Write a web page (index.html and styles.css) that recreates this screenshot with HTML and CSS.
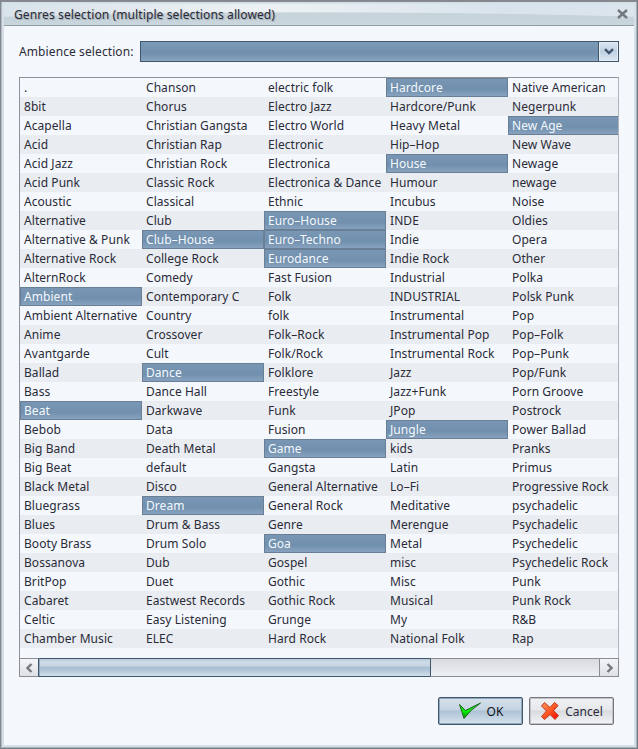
FILE: index.html
```
<!DOCTYPE html>
<html lang="en">
<head>
<meta charset="utf-8">
<title>Genres selection</title>
<link rel="stylesheet" href="styles.css">
</head>
<body>
<div class="window">
<header class="titlebar">
<h1>Genres selection (multiple selections allowed)</h1>
<svg class="close" width="11" height="10" viewBox="0 0 11 10"><path d="M1 1L10 9M10 1L1 9"/></svg>
</header>
<main class="content">
<div class="ambience">
<span class="label">Ambience selection:</span>
<div class="combo"><div class="combo-value"></div><div class="combo-arrow"><svg width="10" height="7" viewBox="0 0 10 7"><path d="M1 1.2L5 5L9 1.2"/></svg></div></div>
</div>
<div class="list">
<div class="columns">
<ul><li>.</li><li>8bit</li><li>Acapella</li><li>Acid</li><li>Acid Jazz</li><li>Acid Punk</li><li>Acoustic</li><li>Alternative</li><li>Alternative &amp; Punk</li><li>Alternative Rock</li><li>AlternRock</li><li class="sel">Ambient</li><li>Ambient Alternative</li><li>Anime</li><li>Avantgarde</li><li>Ballad</li><li>Bass</li><li class="sel">Beat</li><li>Bebob</li><li>Big Band</li><li>Big Beat</li><li>Black Metal</li><li>Bluegrass</li><li>Blues</li><li>Booty Brass</li><li>Bossanova</li><li>BritPop</li><li>Cabaret</li><li>Celtic</li><li>Chamber Music</li></ul>
<ul><li>Chanson</li><li>Chorus</li><li>Christian Gangsta</li><li>Christian Rap</li><li>Christian Rock</li><li>Classic Rock</li><li>Classical</li><li>Club</li><li class="sel">Club–House</li><li>College Rock</li><li>Comedy</li><li>Contemporary C</li><li>Country</li><li>Crossover</li><li>Cult</li><li class="sel">Dance</li><li>Dance Hall</li><li>Darkwave</li><li>Data</li><li>Death Metal</li><li>default</li><li>Disco</li><li class="sel">Dream</li><li>Drum &amp; Bass</li><li>Drum Solo</li><li>Dub</li><li>Duet</li><li>Eastwest Records</li><li>Easy Listening</li><li>ELEC</li></ul>
<ul><li>electric folk</li><li>Electro Jazz</li><li>Electro World</li><li>Electronic</li><li>Electronica</li><li>Electronica &amp; Dance</li><li>Ethnic</li><li class="sel">Euro–House</li><li class="sel">Euro–Techno</li><li class="sel">Eurodance</li><li>Fast Fusion</li><li>Folk</li><li>folk</li><li>Folk–Rock</li><li>Folk/Rock</li><li>Folklore</li><li>Freestyle</li><li>Funk</li><li>Fusion</li><li class="sel">Game</li><li>Gangsta</li><li>General Alternative</li><li>General Rock</li><li>Genre</li><li class="sel">Goa</li><li>Gospel</li><li>Gothic</li><li>Gothic Rock</li><li>Grunge</li><li>Hard Rock</li></ul>
<ul><li class="sel">Hardcore</li><li>Hardcore/Punk</li><li>Heavy Metal</li><li>Hip–Hop</li><li class="sel">House</li><li>Humour</li><li>Incubus</li><li>INDE</li><li>Indie</li><li>Indie Rock</li><li>Industrial</li><li>INDUSTRIAL</li><li>Instrumental</li><li>Instrumental Pop</li><li>Instrumental Rock</li><li>Jazz</li><li>Jazz+Funk</li><li>JPop</li><li class="sel">Jungle</li><li>kids</li><li>Latin</li><li>Lo–Fi</li><li>Meditative</li><li>Merengue</li><li>Metal</li><li>misc</li><li>Misc</li><li>Musical</li><li>My</li><li>National Folk</li></ul>
<ul><li>Native American</li><li>Negerpunk</li><li class="sel">New Age</li><li>New Wave</li><li>Newage</li><li>newage</li><li>Noise</li><li>Oldies</li><li>Opera</li><li>Other</li><li>Polka</li><li>Polsk Punk</li><li>Pop</li><li>Pop–Folk</li><li>Pop–Punk</li><li>Pop/Funk</li><li>Porn Groove</li><li>Postrock</li><li>Power Ballad</li><li>Pranks</li><li>Primus</li><li>Progressive Rock</li><li>psychadelic</li><li>Psychadelic</li><li>Psychedelic</li><li>Psychedelic Rock</li><li>Punk</li><li>Punk Rock</li><li>R&amp;B</li><li>Rap</li></ul>
</div>
</div>
<div class="scrollbar">
<div class="step"><svg width="7" height="10" viewBox="0 0 7 10"><path d="M5.5 1L1.5 5L5.5 9"/></svg></div>
<div class="thumb"></div>
<div class="track"></div>
<div class="step"><svg width="7" height="10" viewBox="0 0 7 10"><path d="M1.5 1L5.5 5L1.5 9"/></svg></div>
</div>
<div class="buttons">
<div class="button primary"><svg width="24" height="18" viewBox="0 0 24 18"><defs><linearGradient id="g" x1="0" y1="0" x2="0" y2="1"><stop offset="0" stop-color="#35c835"/><stop offset=".55" stop-color="#00f000"/><stop offset="1" stop-color="#087808"/></linearGradient></defs><path d="M1.5 2.5L7.5 8.5L22.500 1Q12 8 6 16.500Q4 10 1.500 2.500Z" fill="url(#g)" stroke="#176b1c" stroke-linejoin="round"/></svg><span>OK</span></div>
<div class="button"><svg width="20" height="20" viewBox="0 0 20 20"><defs><linearGradient id="r" x1="0" y1="0" x2="1" y2="1"><stop offset="0" stop-color="#ff9a60"/><stop offset=".5" stop-color="#ff5722"/><stop offset="1" stop-color="#f50000"/></linearGradient></defs><path d="M4.500 1.500L10 6.500L14.500 1.500L18 4.500L13.500 9.800L18.500 14.500L15 18.500L10 13.500L4.500 18.500L1.500 15.500L6.500 10L1.500 5Z" fill="url(#r)" stroke="#c2381c" stroke-linejoin="round"/></svg><span>Cancel</span></div>
</div>
</main>
</div>
</body>
</html>
```
FILE: styles.css
```
* { box-sizing: border-box; }
body { margin: 0; font: 12px/19px "Noto Sans", sans-serif; letter-spacing: 0.06px; color: #2b2b38; }
svg { display: block; flex: none; }
svg path { stroke-width: 1; }
.window { width: 638px; height: 749px; border: 1px solid #85888f; border-top-width: 2px; border-right-color: #777d84; border-bottom-color: #777d84; background: #d5e0e8; box-shadow: inset 1px 0 #adb8c0, inset -1px -1px #a5b1b9; padding: 2px 3px 3px; display: flex; flex-direction: column; }
.titlebar { height: 22px; flex: none; display: flex; align-items: center; justify-content: space-between; padding: 0 6px 0 10px; border-bottom: 1px solid #929da5; background: radial-gradient(ellipse 700px 40px at 50% 48px, #cddae2 40%, #c7d3da 98%, #c7d3da00 100%), linear-gradient(90deg, #d9e3eb, #edf1f3 42%, #d9e3ed 80%, #dce5ee); }
.titlebar h1 { margin: 0; font-size: 12px; font-weight: 400; letter-spacing: 0.11px; text-shadow: 1px 1px 1px #9da8ae; white-space: nowrap; }
.close { margin-top: -1px; }
.close path { fill: none; stroke: #72777c; stroke-width: 2.4; }
.content { flex: 1; background: #f4f8fd; padding: 15px 15px 0; display: flex; flex-direction: column; }
.ambience { height: 21px; display: flex; justify-content: space-between; align-items: center; }
.label { white-space: nowrap; letter-spacing: 0.1px; }
.combo { width: 479px; height: 21px; border: 1px solid #40566d; display: flex; }
.combo-value { flex: 1; background: linear-gradient(#7b9ab7, #7190ae 60%, #84a0bc); border-bottom: 1px solid #8da5bb; }
.combo-arrow { width: 20px; border-left: 1px solid #40566d; background: linear-gradient(#dce7f1, #bfd0e2 50%, #dde8f3); box-shadow: inset 0 0 0 1px #e3ebf3; display: flex; align-items: center; justify-content: center; }
.combo-arrow path { fill: none; stroke: #40566d; stroke-width: 2.4; }
.list { height: 581px; margin-top: 15px; border: 1px solid #8e939a; border-right-color: #b0b4ba; border-bottom: 0; overflow: hidden; }
.columns { display: grid; grid-template-columns: repeat(5, 122px); }
.columns ul { margin: 0; padding: 0; list-style: none; }
.columns li { height: 19px; padding-left: 4px; line-height: 19px; white-space: nowrap; }
.columns li:nth-child(even) { background: #e9edf1; }
.columns li.sel { border: 1px solid #687f95; padding-left: 3px; line-height: 17px; color: #f4f8fd; background: linear-gradient(#7997b4, #7190ae 60%, #87a2be); }
.scrollbar { height: 19px; display: flex; flex: none; border: 1px solid #8a8e94; }
.step { width: 18px; display: flex; align-items: center; justify-content: center; background: linear-gradient(#f3f5f8, #dfe1e5); }
.step path { fill: none; stroke: #74777c; stroke-width: 2.3; }
.step:last-child { border-left: 1px solid #8a8e94; width: 19px; }
.thumb { width: 393px; margin: -1px 0; border: 1px solid #40566d; border-radius: 1px; background: linear-gradient(#b9cbdc, #d0dce8 20%, #c5d4e2 40%, #a9bfd2 50%, #b1c5d7 65%, #d2dfea); box-shadow: inset 1px 0 #94a9bd; }
.track { flex: 1; background: linear-gradient(#d8dadd, #edf0f4); }
.buttons { margin-top: 20px; padding-right: 5px; display: flex; justify-content: flex-end; gap: 6px; }
.button { width: 85px; height: 28px; border: 1px solid #74777c; border-radius: 2px; display: flex; align-items: center; justify-content: center; gap: 5px; background: linear-gradient(#f0f1f3, #e6e8eb 45%, #d8dade 50%, #f2f4f7); box-shadow: inset 0 0 0 1px #c0c3c8; }
.button.primary { border-color: #40566d; color: #101018; background: linear-gradient(#d5e0ea, #c5d4e2 45%, #adc2d5 50%, #d7e3ee); box-shadow: inset 0 0 0 1px #91a7bb; }
```
